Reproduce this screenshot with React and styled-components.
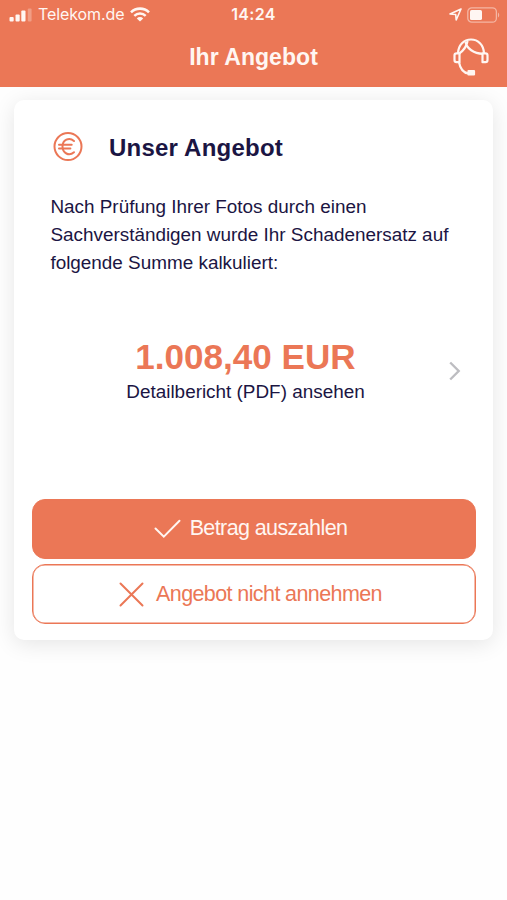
import React from "react";
import styled, { createGlobalStyle } from "styled-components";

const GlobalStyle = createGlobalStyle`
  * {
    box-sizing: border-box;
  }
  body {
    margin: 0;
    background-color: #fefefe;
    font-family: "Liberation Sans", Arial, sans-serif;
    color: #1b1543;
  }
  svg {
    display: block;
    flex: none;
  }
  h1, h2, p {
    margin: 0;
  }
`;

const Screen = styled.div`
  width: 507px;
  height: 900px;
  overflow: hidden;
`;

const Header = styled.header`
  height: 87px;
  background-color: #eb7756;
  color: #fff6f2;
`;

const StatusBar = styled.div`
  display: grid;
  grid-template-columns: 1fr auto 1fr;
  align-items: center;
  height: 29px;
  padding: 0 7px 0 9px;
  font-family: Inter, sans-serif;
  font-size: 16px;
  line-height: 29px;
`;

const StatusGroup = styled.div`
  display: flex;
  align-items: center;
  gap: ${(props) => props.$gap};
  justify-content: ${(props) => (props.$end ? "flex-end" : "flex-start")};
`;

const Carrier = styled.span`
  letter-spacing: -0.1px;
`;

const Clock = styled.span`
  margin-right: 2px;
  font-weight: 600;
  letter-spacing: 0.3px;
`;

const TitleBar = styled.div`
  display: grid;
  grid-template-columns: 1fr auto 1fr;
  align-items: center;
  height: 56px;
  padding: 0 18px;
  svg {
    justify-self: end;
  }
`;

const Title = styled.h1`
  grid-column: 2;
  font-size: 23px;
  line-height: 28px;
  letter-spacing: 0.05px;
`;

const Card = styled.main`
  display: flex;
  flex-direction: column;
  height: 540px;
  margin: 13px 14px 0;
  padding: 32px 17px 16px 18px;
  border-radius: 10px;
  background-color: #fff;
  box-shadow: 0 4px 22px rgba(0, 0, 0, 0.1);
`;

const CardHeading = styled.div`
  display: flex;
  align-items: center;
  gap: 26px;
  height: 30px;
  padding-left: 21px;
`;

const CardTitle = styled.h2`
  padding-top: 2px;
  font-size: 24px;
  line-height: 32px;
  letter-spacing: 0.22px;
`;

const Intro = styled.p`
  margin-top: 30.6px;
  padding-left: 18.4px;
  font-size: 18.9px;
  line-height: 28.4px;
  white-space: pre-line;
`;

const Offer = styled.div`
  display: grid;
  grid-template-columns: 1fr auto 1fr;
  align-items: center;
  margin-top: 58.4px;
  padding-right: 15px;
  svg {
    justify-self: end;
    margin-bottom: 2px;
  }
`;

const OfferText = styled.div`
  grid-column: 2;
  margin-right: 2px;
  text-align: center;
`;

const Amount = styled.p`
  color: #eb7756;
  font-size: 35.1px;
  font-weight: bold;
  line-height: 41px;
`;

const Report = styled.p`
  font-size: 18.9px;
  line-height: 30px;
`;

const Actions = styled.div`
  display: flex;
  flex-direction: column;
  gap: 5.5px;
  margin-top: auto;
`;

const Button = styled.button`
  display: flex;
  align-items: center;
  justify-content: center;
  gap: ${(props) => (props.$primary ? "9px" : "12px")};
  height: 60px;
  padding: 0 7px 0 0;
  border: 1px solid #eb7756;
  border-radius: 13px;
  background-color: ${(props) => (props.$primary ? "#eb7756" : "#fff")};
  box-shadow: inset 0 0 0 0.5px #eb7756;
  color: ${(props) => (props.$primary ? "#fff6f2" : "#eb7756")};
  font-family: inherit;
  font-size: 21.5px;
  letter-spacing: -0.6px;
`;

const SignalIcon = () => (
  <svg width="23" height="14" viewBox="0 0 23 14" fill="currentColor">
    <rect x="0.5" y="9" width="4.2" height="4.5" rx="1" />
    <rect x="6.5" y="6.5" width="4.2" height="7" rx="1" />
    <rect x="12.3" y="2.5" width="4.2" height="11" rx="1" />
    <rect x="18.8" y="0.5" width="3.8" height="13" rx="1" opacity="0.3" />
  </svg>
);

const WifiIcon = () => (
  <svg width="20" height="15" viewBox="0 0 20 15" fill="none" stroke="currentColor">
    <path d="M1 5.3a12.8 12.8 0 0 1 18 0" strokeWidth="2.6" />
    <path d="M4.3 8.9a8.1 8.1 0 0 1 11.4 0" strokeWidth="2.4" />
    <path d="M10 14.6 6.8 11.4a4.6 4.6 0 0 1 6.4 0Z" fill="currentColor" stroke="none" />
  </svg>
);

const LocationIcon = () => (
  <svg width="13" height="13" viewBox="0 0 13 13" fill="none">
    <path
      d="M12 1 1 6l5.7.5L7.2 12Z"
      stroke="currentColor"
      strokeWidth="1.6"
      strokeLinejoin="round"
    />
  </svg>
);

const BatteryIcon = () => (
  <svg width="33" height="16" viewBox="0 0 33 16" fill="none">
    <rect
      x="0.8"
      y="0.8"
      width="28.6"
      height="14.4"
      rx="4"
      stroke="currentColor"
      strokeWidth="1.3"
      opacity="0.5"
    />
    <rect x="3" y="3" width="12" height="10" rx="1.6" fill="currentColor" />
    <path d="M31 5.5c1.6.8 1.6 4.2 0 5Z" fill="currentColor" opacity="0.5" />
  </svg>
);

const HeadsetIcon = () => (
  <svg
    width="36"
    height="38"
    viewBox="0 0 36 38"
    fill="none"
    stroke="currentColor"
    strokeWidth="2.2"
    strokeLinejoin="round"
  >
    <path d="M5 15C5.5 6.8 10.8 1.5 18 1.5S30.5 6.8 31 15" />
    <path d="M6.5 15.3H3.5Q1.5 15.3 1.5 17.5V22Q1.5 24.2 3.5 24.2H6.5Z" />
    <path d="M29.5 15.3H32.5Q34.5 15.3 34.5 17.5V22Q34.5 24.2 32.5 24.2H29.500Z" />
    <path d="M12.6 4C13.5 10.5 21 15.500 29.8 15.8M14.6 3C13.5 8.5 10.5 12.5 6.5 15.3" />
    <path d="M6 24.2C7.2 30.5 10 34.8 15.5 35.500" />
    <rect x="15.5" y="33" width="5.5" height="3.4" fill="currentColor" />
  </svg>
);

const EuroIcon = () => (
  <svg
    width="30"
    height="30"
    viewBox="0 0 30 30"
    fill="none"
    stroke="#eb7756"
    strokeWidth="2"
    strokeLinecap="round"
  >
    <circle cx="15" cy="14.6" r="13.5" />
    <path d="M21 9C16 4.7 9.5 8 9.5 14.6S16 24.5 21 20.2M6 12.8H18.7M6 16.4H17.4" />
  </svg>
);

const ChevronIcon = () => (
  <svg width="13" height="20" viewBox="0 0 13 20" fill="none" stroke="#bdbdc1" strokeWidth="2.4">
    <path d="m2.2 1.5 8.5 8.5-8.5 8.5" />
  </svg>
);

const CheckIcon = () => (
  <svg width="27" height="20" viewBox="0 0 27 20" fill="none" stroke="currentColor" strokeWidth="2">
    <path d="M1.5 9.5 9.8 17.7 25.5 1.8" strokeLinecap="round" />
  </svg>
);

const CrossIcon = () => (
  <svg width="25" height="25" viewBox="0 0 25 25" fill="none" stroke="currentColor" strokeWidth="2">
    <path d="m1.5 1.5 22 22m0-22-22 22" strokeLinecap="round" />
  </svg>
);

const App = () => (
  <Screen>
    <GlobalStyle />
    <Header>
      <StatusBar>
        <StatusGroup $gap="6px">
          <SignalIcon />
          <Carrier>Telekom.de</Carrier>
          <WifiIcon />
        </StatusGroup>
        <Clock>14:24</Clock>
        <StatusGroup $gap="5px" $end>
          <LocationIcon />
          <BatteryIcon />
        </StatusGroup>
      </StatusBar>
      <TitleBar>
        <Title>Ihr Angebot</Title>
        <HeadsetIcon />
      </TitleBar>
    </Header>
    <Card>
      <CardHeading>
        <EuroIcon />
        <CardTitle>Unser Angebot</CardTitle>
      </CardHeading>
      <Intro>
        {`Nach Prüfung Ihrer Fotos durch einen
        Sachverständigen wurde Ihr Schadenersatz auf
        folgende Summe kalkuliert:`}
      </Intro>
      <Offer>
        <OfferText>
          <Amount>1.008,40 EUR</Amount>
          <Report>Detailbericht (PDF) ansehen</Report>
        </OfferText>
        <ChevronIcon />
      </Offer>
      <Actions>
        <Button $primary>
          <CheckIcon />
          Betrag auszahlen
        </Button>
        <Button>
          <CrossIcon />
          Angebot nicht annehmen
        </Button>
      </Actions>
    </Card>
  </Screen>
);

export default App;
